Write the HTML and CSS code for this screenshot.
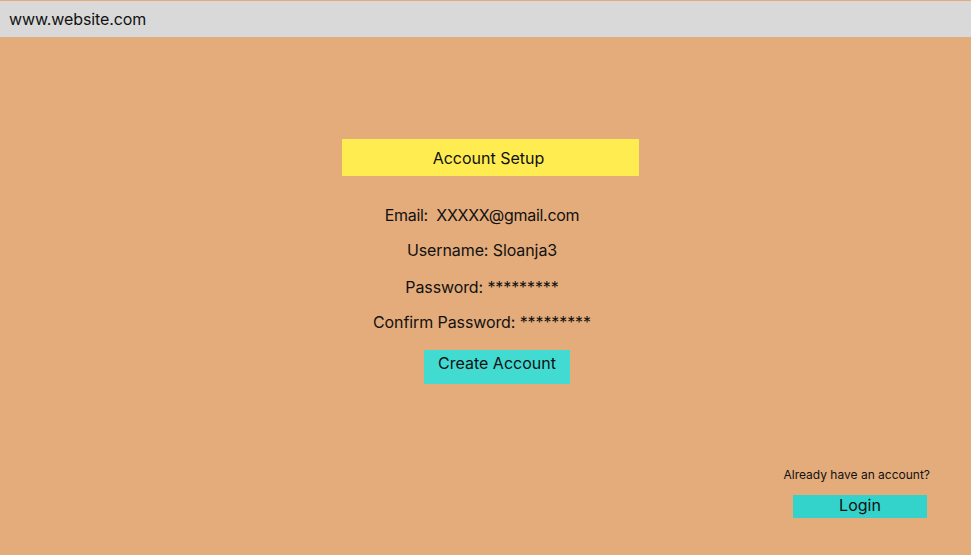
FILE: index.html
```html
<!DOCTYPE html>
<html>
<head>
<meta charset="utf-8">
<link rel="stylesheet" href="styles.css">
</head>
<body>
<header class="urlbar">www.website.com</header>
<main class="page">
  <section class="setup">
    <h1 class="title">Account Setup</h1>
    <p class="field field-email">Email:&nbsp; XXXXX@gmail.com</p>
    <p class="field">Username: Sloanja3</p>
    <p class="field field-pw">Password: *********</p>
    <p class="field">Confirm Password: *********</p>
    <button class="create">Create Account</button>
  </section>
  <aside class="login-box">
    <p class="already">Already have an account?</p>
    <button class="login">Login</button>
  </aside>
</main>
</body>
</html>
```
FILE: styles.css
```css
html, body {
  margin: 0;
  padding: 0;
}
body {
  background: #e4ac7b;
  font-family: Inter, "Noto Sans", sans-serif;
  color: #111;
  width: 971px;
  height: 555px;
  overflow: hidden;
  border-top: 1px solid #e4ac7b;
  box-sizing: border-box;
}
.urlbar {
  height: 36px;
  background: #d9d9d9;
  font-size: 16px;
  line-height: 36px;
  padding-left: 9px;
  letter-spacing: -0.1px;
}
.page {
  display: flex;
  flex-direction: column;
}
.setup {
  width: 964px;
  display: flex;
  flex-direction: column;
  align-items: center;
  padding-top: 102px;
}
.title {
  margin: 0 0 0 17px;
  width: 297px;
  height: 37px;
  box-sizing: border-box;
  padding-right: 4px;
  background: #ffec50;
  font-size: 16px;
  font-weight: 400;
  line-height: 38px;
  text-align: center;
}
.field {
  margin: 0;
  font-size: 16px;
  line-height: 20px;
  margin-top: 15px;
  letter-spacing: -0.1px;
}
.field-email {
  margin-top: 29px;
  letter-spacing: -0.3px;
}
.field-pw {
  margin-top: 17px;
}
.create {
  margin: 18px 0 0 30px;
  width: 146px;
  height: 34px;
  border: none;
  background: #42dbd2;
  font-family: inherit;
  font-size: 16px;
  color: #111;
  padding: 0 0 9px;
}
.login-box {
  display: flex;
  flex-direction: column;
  align-items: flex-end;
  padding-right: 42px;
  margin-top: 83px;
}
.already {
  margin: 0 -1px 0 0;
  font-size: 12px;
  line-height: 16px;
}
.login {
  margin: 12px 2px 0 0;
  width: 134px;
  height: 23px;
  border: none;
  background: #33d3cb;
  font-family: inherit;
  font-size: 16px;
  color: #111;
  padding: 0 0 8px;
}
```
